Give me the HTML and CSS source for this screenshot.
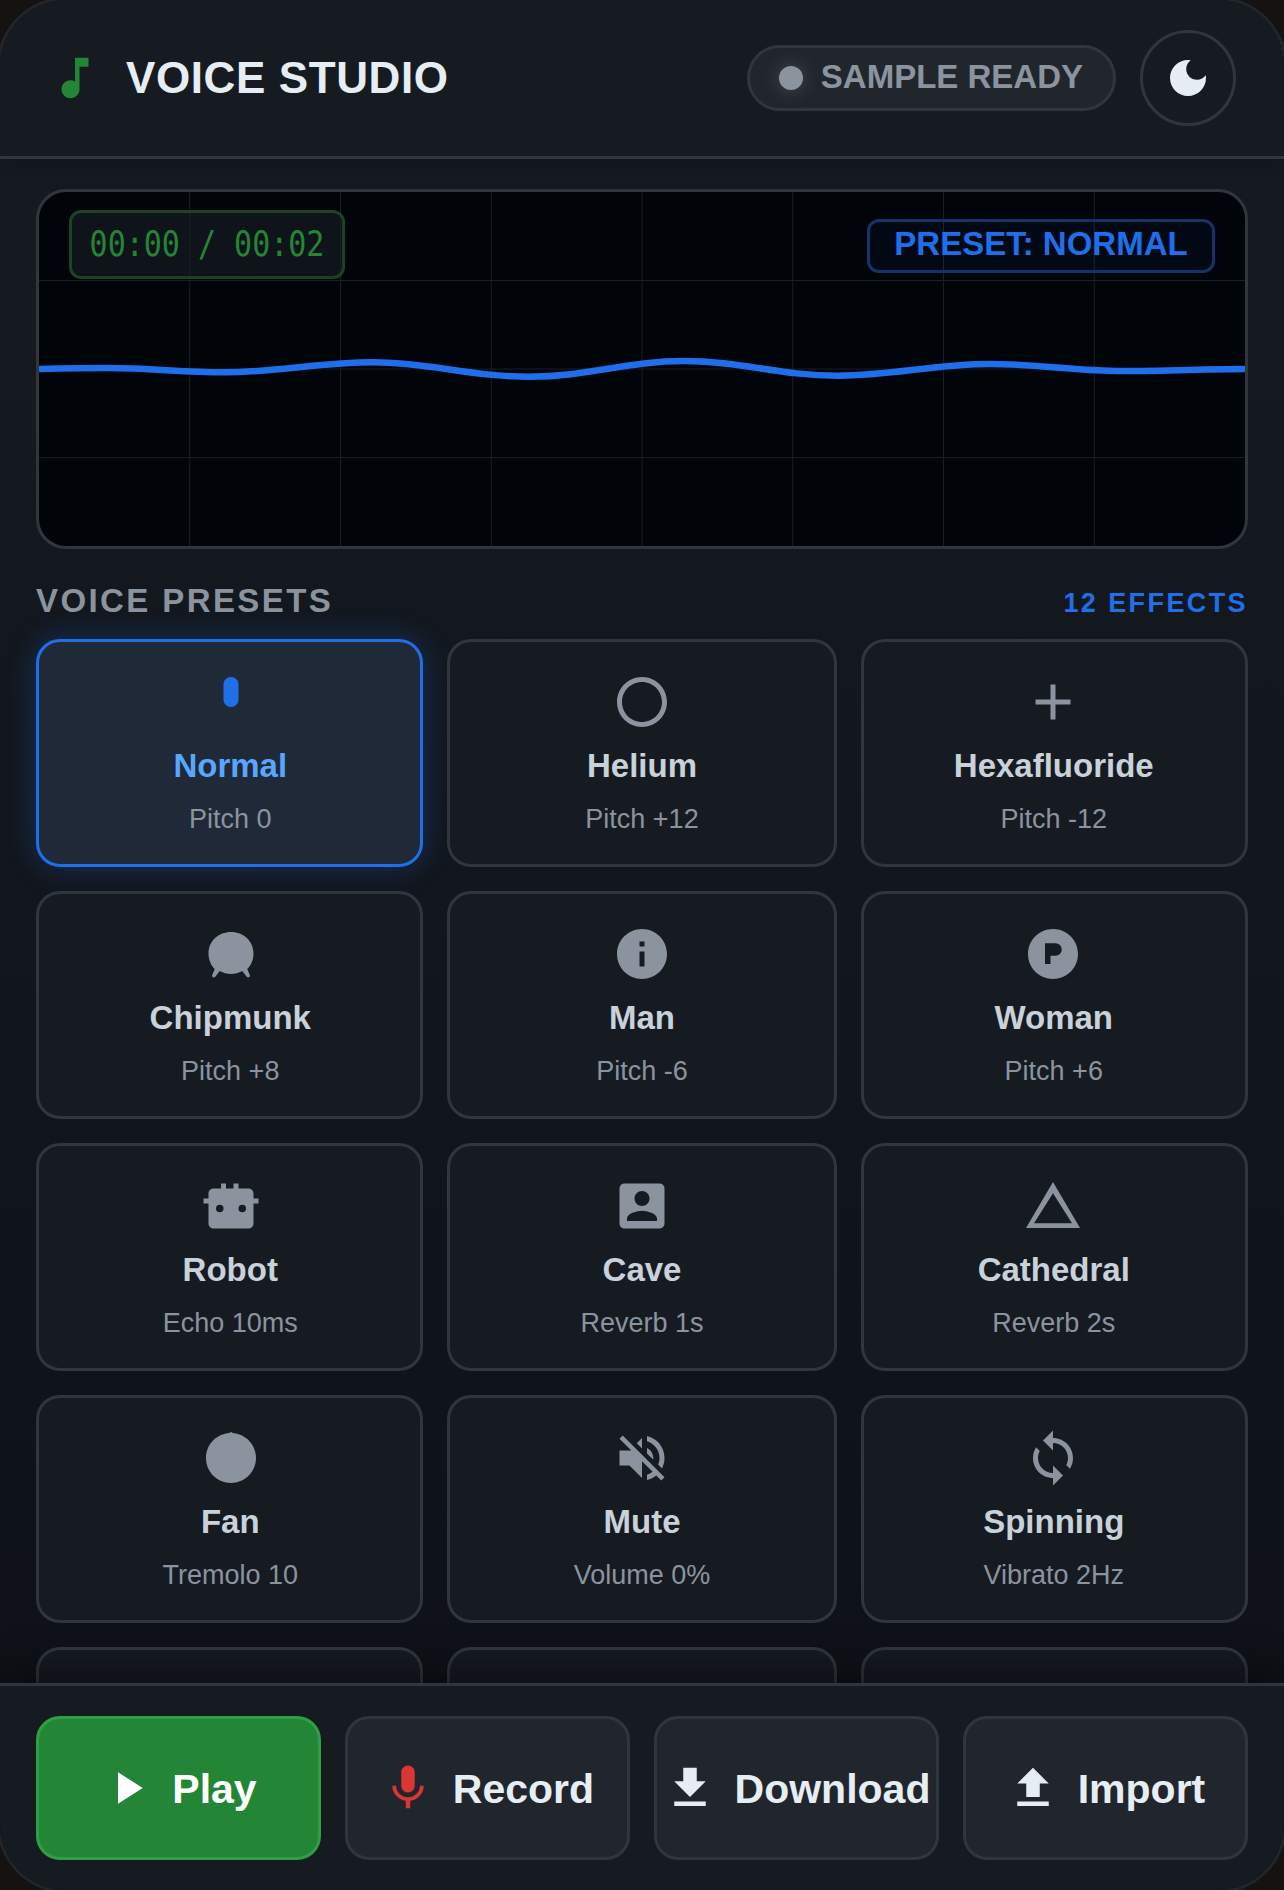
FILE: index.html
```html
<!DOCTYPE html>
<html>
	<head>
		<meta charset="utf-8">
		<title>Voice Studio</title>
		<link rel="stylesheet" href="styles.css">
	</head>
	<body>
		<div class="app">
			<header class="topbar">
				<div class="brand">
					<svg class="logo" viewBox="0 0 24 24"><path d="M12 3v10.55c-.59-.34-1.27-.55-2-.55-2.21 0-4 1.79-4 4s1.79 4 4 4 4-1.79 4-4V7h4V3h-6z"/></svg>
					<h1 class="title">VOICE STUDIO</h1>
				</div>
				<div class="top-actions">
					<div class="status"><span class="status-dot"></span><span class="status-text">SAMPLE READY</span></div>
					<button class="theme-btn">
						<svg class="moon" viewBox="0 0 24 24"><path d="M12 3c-4.97 0-9 4.03-9 9s4.03 9 9 9 9-4.03 9-9c0-.46-.04-.92-.1-1.36-.98 1.37-2.58 2.26-4.4 2.26-2.98 0-5.4-2.42-5.4-5.4 0-1.81.89-3.42 2.26-4.4-.44-.06-.9-.1-1.36-.1z"/></svg>
					</button>
				</div>
			</header>

			<main class="content">
				<section class="scope">
					<svg class="scope-canvas" viewBox="0 0 1206 354">
						<g class="grid-lines">
							<path d="M150.75 0V354M301.5 0V354M452.25 0V354M603 0V354M753.75 0V354M904.5 0V354M1055.25 0V354"/>
							<path d="M0 88.5H1206M0 177H1206M0 265.5H1206"/>
						</g>
						<path class="wave" d="M0 177C25 176.4 45 176 69 176C110 176 145 180.3 186 180.3C240 180.3 280 170.3 334.5 170.3C390 170.3 430 184.7 490.6 184.7C550 184.7 587 169 645 169C702 169 740 183.7 799 183.7C855 183.7 895 172 951 172C1000 172 1035 179 1084 179C1130 179 1165 177 1206 177"/>
					</svg>
					<div class="time"><span class="time-text">00:00 / 00:02</span></div>
					<div class="preset-tag">PRESET: NORMAL</div>
				</section>

				<div class="section-head">
					<h2 class="section-title">VOICE PRESETS</h2>
					<span class="section-count">12 EFFECTS</span>
				</div>

				<div class="presets">
					<div class="preset active">
						<svg class="icon" viewBox="0 0 24 24"><path d="M12 14c1.66 0 3-1.34 3-3V5c0-1.66-1.34-3-3-3S9 3.34 9 5v6c0 1.66 1.34 3 3 3z"/></svg>
						<div class="preset-name">Normal</div>
						<div class="preset-sub">Pitch 0</div>
					</div>
					<div class="preset">
						<svg class="icon" viewBox="0 0 24 24"><path d="M12 2C6.48 2 2 6.48 2 12s4.48 10 10 10 10-4.48 10-10S17.52 2 12 2zm0 18c-4.42 0-8-3.58-8-8s3.58-8 8-8 8 3.58 8 8-3.58 8-8 8z"/></svg>
						<div class="preset-name">Helium</div>
						<div class="preset-sub">Pitch +12</div>
					</div>
					<div class="preset">
						<svg class="icon" viewBox="0 0 24 24"><path d="M19 13h-6v6h-2v-6H5v-2h6V5h2v6h6v2z"/></svg>
						<div class="preset-name">Hexafluoride</div>
						<div class="preset-sub">Pitch -12</div>
					</div>

					<div class="preset">
						<svg class="icon" viewBox="0 0 24 24"><path d="M12 3.2c-5 0-9 3.6-9 8.6 0 2.4.9 4.6 2.5 6.2l-1 2.4c-.3.8.7 1.3 1.2.7l1.8-2.3c1.4.8 2.9 1.2 4.5 1.2s3.100-.4 4.500-1.200l1.800 2.300c.5.600 1.500.100 1.200-.7l-1-2.400C20.100 16.400 21 14.200 21 11.800c0-5-4-8.600-9-8.600z"/></svg>
						<div class="preset-name">Chipmunk</div>
						<div class="preset-sub">Pitch +8</div>
					</div>
					<div class="preset">
						<svg class="icon" viewBox="0 0 24 24"><path d="M12 2C6.48 2 2 6.48 2 12s4.48 10 10 10 10-4.48 10-10S17.52 2 12 2zm1 15h-2v-6h2v6zm0-8h-2V7h2v2z"/></svg>
						<div class="preset-name">Man</div>
						<div class="preset-sub">Pitch -6</div>
					</div>
					<div class="preset">
						<svg class="icon" viewBox="0 0 24 24"><path fill-rule="evenodd" d="M12 2C6.48 2 2 6.48 2 12s4.480 10 10 10 10-4.480 10-10S17.520 2 12 2zM8.800 7.700H13a2.500 2.500 0 0 1 0 5h-2V16H8.800z"/></svg>
						<div class="preset-name">Woman</div>
						<div class="preset-sub">Pitch +6</div>
					</div>

					<div class="preset">
						<svg class="icon" viewBox="0 0 24 24"><path fill-rule="evenodd" d="M8 3h2v2h3V3h2v2h4c1.100 0 2 .9 2 2v2h2v2h-2v8c0 1.100-.9 2-2 2H5c-1.100 0-2-.9-2-2v-8H1V9h2V7c0-1.100.9-2 2-2h3V3zM7.500 11.500a1.500 1.500 0 1 0 0 3 1.500 1.500 0 0 0 0-3zm9 0a1.500 1.500 0 1 0 0 3 1.500 1.500 0 0 0 0-3z"/></svg>
						<div class="preset-name">Robot</div>
						<div class="preset-sub">Echo 10ms</div>
					</div>
					<div class="preset">
						<svg class="icon" viewBox="0 0 24 24"><path d="M3 5v14c0 1.100.89 2 2 2h14c1.100 0 2-.9 2-2V5c0-1.100-.9-2-2-2H5c-1.110 0-2 .9-2 2zm12 4c0 1.660-1.340 3-3 3s-3-1.340-3-3 1.340-3 3-3 3 1.340 3 3zm-9 8c0-2 4-3.100 6-3.100s6 1.100 6 3.100v1H6v-1z"/></svg>
						<div class="preset-name">Cave</div>
						<div class="preset-sub">Reverb 1s</div>
					</div>
					<div class="preset">
						<svg class="icon" viewBox="0 0 24 24"><path fill-rule="evenodd" d="M12 2.400L22.800 20.800H1.200zM12 6.900L4.400 18.900h15.200z"/></svg>
						<div class="preset-name">Cathedral</div>
						<div class="preset-sub">Reverb 2s</div>
					</div>

					<div class="preset">
						<svg class="icon" viewBox="0 0 24 24"><path d="M11.500 1.700h1V2c5.300.3 9.500 4.600 9.500 10 0 5.500-4.500 10-10 10S2 17.500 2 12c0-5.400 4.200-9.700 9.500-10z"/></svg>
						<div class="preset-name">Fan</div>
						<div class="preset-sub">Tremolo 10</div>
					</div>
					<div class="preset">
						<svg class="icon" viewBox="0 0 24 24"><path d="M16.500 12c0-1.770-1.020-3.290-2.500-4.030v2.210l2.450 2.450c.03-.2.050-.41.050-.63zm2.500 0c0 .94-.2 1.820-.54 2.640l1.510 1.510C20.630 14.910 21 13.500 21 12c0-4.280-2.990-7.860-7-8.770v2.060c2.890.86 5 3.540 5 6.710zM4.270 3L3 4.270 7.730 9H3v6h4l5 5v-6.730l4.250 4.250c-.67.52-1.420.93-2.250 1.180v2.060c1.380-.31 2.630-.95 3.690-1.810L19.730 21 21 19.730l-9-9L4.270 3zM12 4L9.910 6.090 12 8.180V4z"/></svg>
						<div class="preset-name">Mute</div>
						<div class="preset-sub">Volume 0%</div>
					</div>
					<div class="preset">
						<svg class="icon" viewBox="0 0 24 24"><path d="M12 4V1L8 5l4 4V6c3.310 0 6 2.690 6 6 0 1.010-.25 1.970-.7 2.800l1.460 1.460C19.540 15.030 20 13.570 20 12c0-4.420-3.580-8-8-8zm0 14c-3.310 0-6-2.690-6-6 0-1.010.25-1.970.7-2.800L5.240 7.740C4.460 8.970 4 10.430 4 12c0 4.420 3.580 8 8 8v3l4-4-4-4v3z"/></svg>
						<div class="preset-name">Spinning</div>
						<div class="preset-sub">Vibrato 2Hz</div>
					</div>

					<div class="preset"></div>
					<div class="preset"></div>
					<div class="preset"></div>
				</div>
			</main>

			<footer class="controls">
				<button class="ctrl play">
					<svg class="ctrl-icon" viewBox="0 0 24 24"><path d="M8 5v14l11-7z"/></svg>
					<span class="ctrl-label">Play</span>
				</button>
				<button class="ctrl">
					<svg class="ctrl-icon mic" viewBox="0 0 24 24"><path d="M12 14c1.660 0 2.990-1.340 2.990-3L15 5c0-1.660-1.340-3-3-3S9 3.340 9 5v6c0 1.660 1.340 3 3 3zm5.300-3c0 3-2.540 5.100-5.300 5.100S6.700 14 6.700 11H5c0 3.410 2.720 6.230 6 6.720V21h2v-3.280c3.280-.48 6-3.300 6-6.720h-1.700z"/></svg>
					<span class="ctrl-label">Record</span>
				</button>
				<button class="ctrl">
					<svg class="ctrl-icon" viewBox="0 0 24 24"><path d="M19 9h-4V3H9v6H5l7 7 7-7zM5 18v2h14v-2H5z"/></svg>
					<span class="ctrl-label">Download</span>
				</button>
				<button class="ctrl">
					<svg class="ctrl-icon" viewBox="0 0 24 24"><path d="M9 16h6v-6h4l-7-7-7 7h4zm-4 2h14v2H5z"/></svg>
					<span class="ctrl-label">Import</span>
				</button>
			</footer>
		</div>
	</body>
</html>
```

FILE: styles.css
```css
* {
  box-sizing: border-box;
}

body {
  margin: 0;
  background: #141311;
  font-family: "Liberation Sans", Arial, sans-serif;
}

/* the ring only shows on the rounded corners, the rest is off screen */
.app {
  display: flex;
  flex-direction: column;
  width: 1284px;
  height: 1890px;
  border-radius: 66px;
  overflow: hidden;
  background: linear-gradient(180deg, #161b22, #0d1117);
  box-shadow: 0 0 0 3px #22252a;
}

.topbar {
  position: relative;
  z-index: 2;
  display: flex;
  flex: none;
  align-items: center;
  justify-content: space-between;
  height: 159px;
  padding: 0 48px;
  background: #161b22;
  border-bottom: 3px solid #30363d;
  box-shadow: 0 6px 24px rgba(0, 0, 0, 0.2);
}

.brand {
  display: flex;
  align-items: center;
  gap: 24px;
}

.logo {
  width: 54px;
  height: 54px;
  fill: #238636;
}

.title {
  margin: 0;
  color: #e6edf3;
  font-size: 44px;
  font-weight: 700;
  letter-spacing: 0.6px;
}

.top-actions {
  display: flex;
  align-items: center;
  gap: 24px;
}

.status {
  display: flex;
  align-items: center;
  gap: 18px;
  height: 66px;
  padding: 0 30px 0 29px;
  background: #21262d;
  border: 3px solid #30363d;
  border-radius: 33px;
  color: #8b949e;
  font-size: 33px;
  font-weight: 700;
}

.status-text {
  padding-bottom: 3px;
}

.status-dot {
  width: 24px;
  height: 24px;
  background: #8b949e;
  border-radius: 50%;
  box-shadow: 0 0 18px rgba(139, 148, 158, 0.35);
}

.theme-btn {
  display: flex;
  align-items: center;
  justify-content: center;
  width: 96px;
  height: 96px;
  padding: 0;
  background: #161b22;
  border: 3px solid #30363d;
  border-radius: 50%;
}

.moon {
  width: 48px;
  height: 48px;
  fill: #e6edf3;
}

.content {
  flex: 1;
  min-height: 0;
  padding: 30px 36px 0;
  overflow: hidden;
}

.scope {
  position: relative;
  height: 360px;
  background: #010409;
  border: 3px solid #30363d;
  border-radius: 30px;
  overflow: hidden;
}

.scope-canvas {
  display: block;
  width: 100%;
  height: 100%;
}

.grid-lines path {
  fill: none;
  stroke: #1a1f26;
  stroke-width: 1;
}

.wave {
  fill: none;
  stroke: #1f6feb;
  stroke-width: 6.5;
}

.time {
  position: absolute;
  top: 18px;
  left: 30px;
  display: flex;
  align-items: center;
  justify-content: center;
  width: 276px;
  height: 69px;
  padding-bottom: 2px;
  background: rgba(22, 27, 34, 0.7);
  border: 3px solid #1b4225;
  border-radius: 12px;
  color: #238636;
  font-family: "DejaVu Sans Mono", monospace;
  font-size: 30px;
}

/* digits are taller and thinner than the font at this width */
.time-text {
  transform: scaleY(1.2);
}

.preset-tag {
  position: absolute;
  top: 27px;
  right: 30px;
  display: flex;
  align-items: center;
  justify-content: center;
  width: 348px;
  height: 54px;
  padding-bottom: 5px;
  background: rgba(31, 111, 235, 0.05);
  border: 3px solid #153368;
  border-radius: 12px;
  color: #1f6feb;
  font-size: 33px;
  font-weight: 700;
}

.section-head {
  display: flex;
  align-items: baseline;
  justify-content: space-between;
  height: 38px;
  margin: 33px 0 19px;
}

.section-title {
  margin: 0;
  color: #8b949e;
  font-size: 33px;
  font-weight: 700;
  letter-spacing: 2.4px;
}

.section-count {
  color: #1f6feb;
  font-size: 27px;
  font-weight: 700;
  letter-spacing: 2.4px;
}

.presets {
  display: grid;
  grid-template-columns: 1fr 390px 1fr;
  grid-auto-rows: 228px;
  gap: 24px;
}

.preset {
  display: flex;
  flex-direction: column;
  align-items: center;
  padding-top: 30px;
  background: #161b22;
  border: 3px solid #30363d;
  border-radius: 24px;
}

/* side columns: content sits a bit towards the middle, icons a bit more */
.preset:nth-child(3n + 1) {
  padding-left: 1.5px;
}

.preset:nth-child(3n + 1) .icon {
  margin-left: 1.5px;
}

.preset:nth-child(3n) {
  padding-right: 1.5px;
}

.preset:nth-child(3n) .icon {
  margin-right: 1.5px;
}

.icon {
  flex: none;
  width: 60px;
  height: 60px;
  fill: #8b949e;
}

.preset-name {
  margin-top: 15px;
  color: #c9d1d9;
  font-size: 33px;
  font-weight: 700;
  line-height: 38px;
}

.preset-sub {
  margin-top: 19px;
  color: #8b949e;
  font-size: 27px;
  line-height: 31px;
}

.preset.active {
  background: #1f2937;
  border-color: #1f6feb;
  box-shadow: 0 0 30px rgba(31, 111, 235, 0.3);
}

.preset.active .icon {
  fill: #1f6feb;
}

.preset.active .preset-name {
  color: #58a6ff;
}

.controls {
  position: relative;
  z-index: 2;
  display: grid;
  flex: none;
  grid-template-columns: repeat(4, 1fr);
  gap: 24px;
  height: 207px;
  padding: 30px 36px 30px;
  background: #161b22;
  border-top: 3px solid #30363d;
  box-shadow: 0 -12px 36px rgba(0, 0, 0, 0.45);
}

.ctrl {
  display: flex;
  align-items: center;
  justify-content: center;
  gap: 18px;
  padding: 0;
  background: #21262d;
  border: 3px solid #30363d;
  border-radius: 24px;
  color: #e6edf3;
  font-family: inherit;
  font-size: 41px;
  font-weight: 700;
  white-space: nowrap;
}

.ctrl-label {
  padding-top: 2px;
}

.ctrl-icon {
  flex: none;
  width: 54px;
  height: 54px;
  fill: currentColor;
}

.ctrl-icon.mic {
  fill: #da3633;
}

.ctrl.play {
  background: #238636;
  border-color: #2ea043;
  color: #fff;
}
```
